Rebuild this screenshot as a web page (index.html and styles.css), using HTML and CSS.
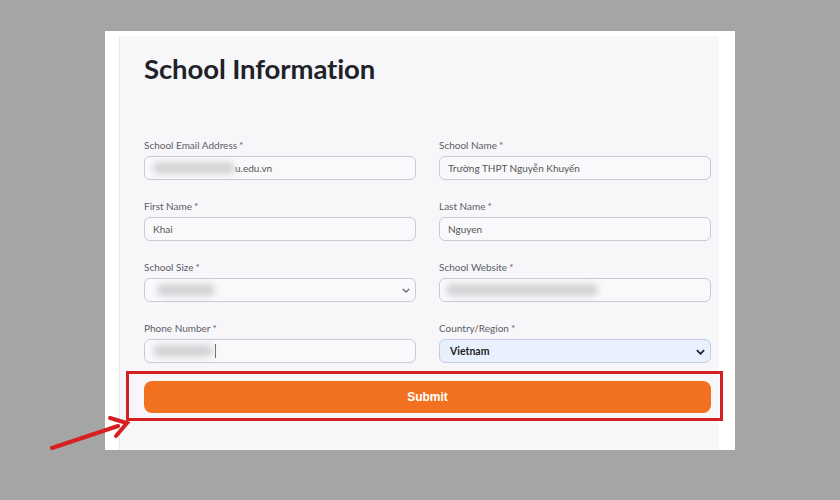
FILE: index.html
```html
<!DOCTYPE html>
<html>
<head>
<meta charset="utf-8">
<link rel="stylesheet" href="styles.css">
</head>
<body>
<div class="panel">
  <div class="card">
    <h1 class="title">School Information</h1>
    <div class="grid">
      <div class="field">
        <div class="label">School Email Address<span class="req">*</span></div>
        <div class="input"><span class="blur b-email"></span><span class="val">u.edu.vn</span></div>
      </div>
      <div class="field">
        <div class="label">School Name<span class="req">*</span></div>
        <div class="input"><span class="val">Trường THPT Nguyễn Khuyến</span></div>
      </div>
      <div class="field">
        <div class="label">First Name<span class="req">*</span></div>
        <div class="input"><span class="val">Khai</span></div>
      </div>
      <div class="field">
        <div class="label">Last Name<span class="req">*</span></div>
        <div class="input"><span class="val">Nguyen</span></div>
      </div>
      <div class="field">
        <div class="label">School Size<span class="req">*</span></div>
        <div class="input select"><span class="blur b-size"></span>
          <svg class="chev" viewBox="0 0 10 6" width="8" height="5"><path d="M1 1l4 4 4-4" fill="none" stroke="#555" stroke-width="1.4"/></svg>
        </div>
      </div>
      <div class="field">
        <div class="label">School Website<span class="req">*</span></div>
        <div class="input"><span class="blur b-web"></span></div>
      </div>
      <div class="field">
        <div class="label">Phone Number<span class="req">*</span></div>
        <div class="input"><span class="blur b-phone"></span><span class="caret"></span></div>
      </div>
      <div class="field">
        <div class="label">Country/Region<span class="req">*</span></div>
        <div class="input select autofill"><span class="val strong">Vietnam</span>
          <svg class="chev" viewBox="0 0 10 6" width="9" height="6"><path d="M1 1l4 4 4-4" fill="none" stroke="#222" stroke-width="2"/></svg>
        </div>
      </div>
    </div>
    <div class="submit">Submit</div>
  </div>
</div>
<div class="highlight"></div>
<svg class="arrow" width="90" height="40" viewBox="0 0 90 40">
  <line x1="2" y1="36" x2="68" y2="14" stroke="#d61f1f" stroke-width="4" stroke-linecap="round"/>
  <path d="M60 6 L77 11 L66 24" fill="none" stroke="#d61f1f" stroke-width="4" stroke-linejoin="miter" stroke-linecap="round"/>
</svg>
</body>
</html>
```
FILE: styles.css
```css
html, body {
  margin: 0;
  padding: 0;
}
body {
  width: 840px;
  height: 500px;
  background: #a5a5a5;
  padding: 31px 0 0 105px;
  box-sizing: border-box;
  position: relative;
  font-family: Lato, "Open Sans", sans-serif;
  overflow: hidden;
}
.panel {
  width: 630px;
  height: 419px;
  background: #ffffff;
  padding: 5px 16px 0 14px;
  box-sizing: border-box;
  display: flex;
}
.card {
  flex: 1;
  background: #f7f7f9;
  border-left: 1px solid #e9e9ee;
  padding: 0 7px 0 24px;
  display: flex;
  flex-direction: column;
}
.title {
  margin: 16px 0 0 0;
  font-size: 27.5px;
  line-height: 34px;
  font-weight: 700;
  color: #20222a;
  letter-spacing: -0.1px;
}
.grid {
  margin-top: 53px;
  display: grid;
  grid-template-columns: 272px 272px;
  column-gap: 23px;
  row-gap: 20px;
}
.field {
  display: flex;
  flex-direction: column;
}
.label {
  font-size: 10px;
  line-height: 12px;
  color: #5b5d66;
  margin-bottom: 5px;
}
.req {
  margin-left: 2px;
}
.input {
  height: 24px;
  box-sizing: border-box;
  border: 1px solid #c9cbd4;
  border-radius: 6px;
  background: #f9f9fb;
  display: flex;
  align-items: center;
  padding-left: 8px;
  position: relative;
  font-size: 10px;
  color: #555;
}
.val {
  white-space: nowrap;
}
.strong {
  font-weight: 700;
  color: #222;
  font-size: 10.5px;
  padding-left: 2px;
}
.autofill {
  background: #e8f0fe;
  border-color: #c6cde0;
}
.blur {
  display: inline-block;
  height: 12px;
  background: #d3d3d6;
  border-radius: 6px;
  filter: blur(3px);
}
.b-email { width: 82px; margin-left: 0; }
.b-size { width: 58px; margin-left: 4px; }
.b-web { width: 152px; margin-left: -2px; }
.b-phone { width: 60px; margin-left: 0; }
.caret {
  display: inline-block;
  width: 1px;
  height: 14px;
  background: #666;
  margin-left: 2px;
}
.chev {
  position: absolute;
  right: 5px;
  top: 9px;
}
.submit {
  margin-top: 18px;
  width: 567px;
  height: 32px;
  background: #f27120;
  border-radius: 8px;
  color: #fff;
  font-family: "Liberation Sans", Arial, sans-serif;
  font-weight: 700;
  font-size: 12px;
  display: flex;
  align-items: center;
  justify-content: center;
}
.highlight {
  position: absolute;
  left: 126px;
  top: 371px;
  width: 597px;
  height: 50px;
  box-sizing: border-box;
  border: 3px solid #d42020;
}
.arrow {
  position: absolute;
  left: 50px;
  top: 412px;
}
```
